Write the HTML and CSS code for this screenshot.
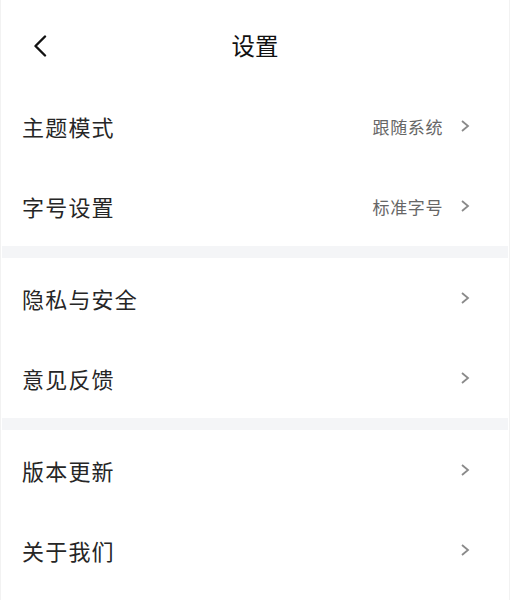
FILE: index.html
```html
<!DOCTYPE html>
<html lang="zh-CN">
<head>
<meta charset="utf-8">
<title>设置</title>
<link rel="stylesheet" href="styles.css">
</head>
<body>
<div class="page">
  <header class="nav">
    <span class="back">
      <svg width="14" height="22" viewBox="0 0 14 22"><path d="M12 1.5 L2.5 11 L12 20.5" fill="none" stroke="#111" stroke-width="2.4" stroke-linecap="round" stroke-linejoin="round"/></svg>
    </span>
    <h1 class="title">设置</h1>
  </header>
  <section class="group">
    <div class="row"><span class="label">主题模式</span><span class="value">跟随系统</span><span class="arrow"><svg width="10" height="12" viewBox="0 0 10 12"><path d="M2 1 L8 6 L2 11" fill="none" stroke="#8a8a8a" stroke-width="1.8"/></svg></span></div>
    <div class="row"><span class="label">字号设置</span><span class="value">标准字号</span><span class="arrow"><svg width="10" height="12" viewBox="0 0 10 12"><path d="M2 1 L8 6 L2 11" fill="none" stroke="#8a8a8a" stroke-width="1.8"/></svg></span></div>
  </section>
  <div class="gap"></div>
  <section class="group">
    <div class="row"><span class="label">隐私与安全</span><span class="arrow"><svg width="10" height="12" viewBox="0 0 10 12"><path d="M2 1 L8 6 L2 11" fill="none" stroke="#8a8a8a" stroke-width="1.8"/></svg></span></div>
    <div class="row"><span class="label">意见反馈</span><span class="arrow"><svg width="10" height="12" viewBox="0 0 10 12"><path d="M2 1 L8 6 L2 11" fill="none" stroke="#8a8a8a" stroke-width="1.8"/></svg></span></div>
  </section>
  <div class="gap"></div>
  <section class="group">
    <div class="row"><span class="label">版本更新</span><span class="arrow"><svg width="10" height="12" viewBox="0 0 10 12"><path d="M2 1 L8 6 L2 11" fill="none" stroke="#8a8a8a" stroke-width="1.8"/></svg></span></div>
    <div class="row"><span class="label">关于我们</span><span class="arrow"><svg width="10" height="12" viewBox="0 0 10 12"><path d="M2 1 L8 6 L2 11" fill="none" stroke="#8a8a8a" stroke-width="1.8"/></svg></span></div>
  </section>
</div>
</body>
</html>
```
FILE: styles.css
```css
html, body {
  margin: 0;
  padding: 0;
  background: #ffffff;
}
body {
  font-family: "Noto Sans CJK SC", "Noto Sans", sans-serif;
  color: #222;
}
.page {
  width: 510px;
  height: 600px;
  box-sizing: border-box;
  border-left: 1px solid #f2f2f2;
  border-right: 1px solid #f2f2f2;
  padding: 0 1px;
  overflow: hidden;
}
.nav {
  height: 86px;
  display: grid;
  grid-template-columns: 1fr auto 1fr;
  align-items: center;
  padding-top: 6px;
  box-sizing: border-box;
}
.back {
  grid-column: 1;
  grid-row: 1;
  justify-self: start;
  margin-left: 31px;
  display: flex;
}
.title {
  grid-column: 2;
  grid-row: 1;
  margin: 0;
  font-size: 23.5px;
  font-weight: 400;
  color: #111;
  line-height: 1;
}
.row {
  height: 80px;
  display: flex;
  align-items: center;
  padding: 0 38px 0 20px;
}
.label {
  flex: 1;
  font-size: 22px;
  letter-spacing: 1.2px;
  color: #262626;
  line-height: 1;
}
.value {
  font-size: 17px;
  letter-spacing: 0.6px;
  color: #666;
  margin-right: 17px;
  line-height: 1;
}
.arrow {
  display: flex;
}
.gap {
  height: 12px;
  background: #f4f5f7;
}
```
